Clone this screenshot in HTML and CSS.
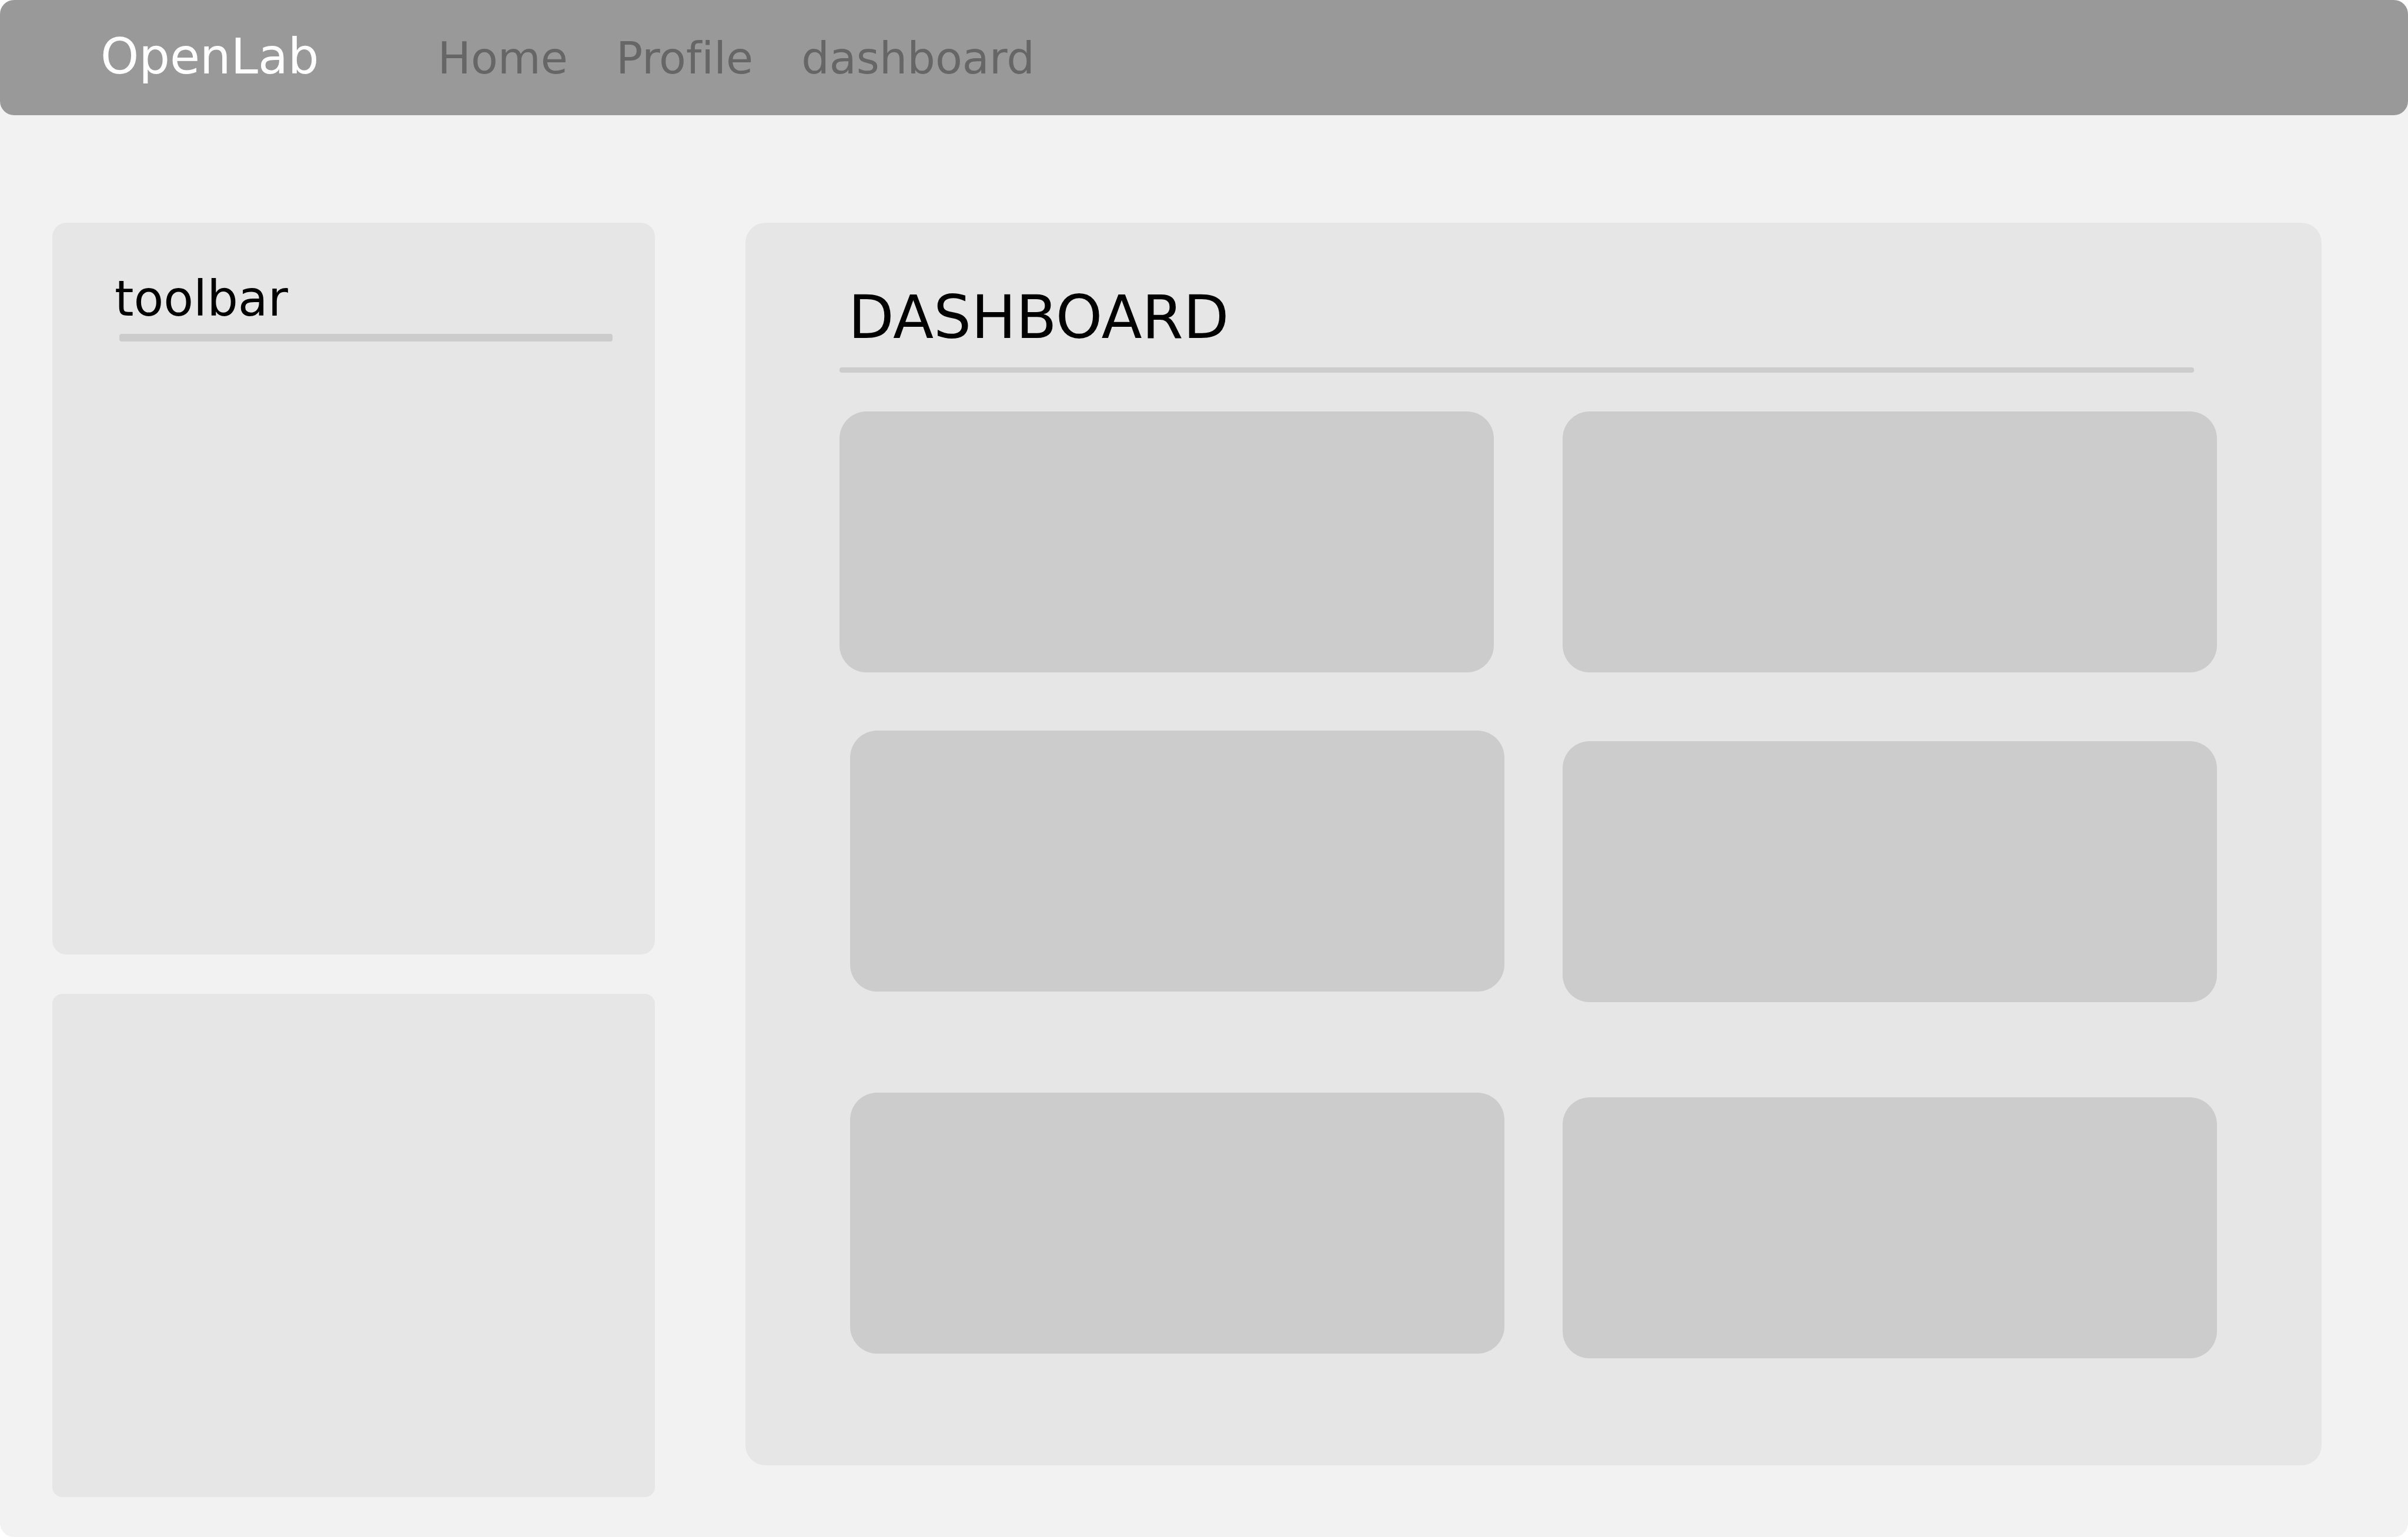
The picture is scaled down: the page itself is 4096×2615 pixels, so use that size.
FILE: index.html
```html
<!DOCTYPE html>
<html lang="en">
<head>
  <meta charset="utf-8">
  <meta name="viewport" content="width=device-width, initial-scale=1">
  <title>OpenLab</title>
  <link rel="stylesheet" href="styles.css">
</head>
<body>
  <div class="page">
    <header class="navbar">
      <a class="brand" href="#">OpenLab</a>
      <nav class="nav-links">
        <a class="nav-link" href="#">Home</a>
        <a class="nav-link" href="#">Profile</a>
        <a class="nav-link" href="#">dashboard</a>
      </nav>
    </header>
    <div class="layout">
      <aside class="sidebar">
        <section class="panel toolbar">
          <h2 class="toolbar-title">toolbar</h2>
          <hr class="rule toolbar-rule">
        </section>
        <section class="panel side-panel"></section>
      </aside>
      <main class="dashboard">
        <h1 class="dashboard-title">DASHBOARD</h1>
        <hr class="rule dashboard-rule">
        <div class="cards">
          <div class="column column-left">
            <article class="card"></article>
            <article class="card"></article>
            <article class="card"></article>
          </div>
          <div class="column column-right">
            <article class="card"></article>
            <article class="card"></article>
            <article class="card"></article>
          </div>
        </div>
      </main>
    </div>
  </div>
</body>
</html>
```

FILE: styles.css
```css
* {
  box-sizing: border-box;
}

html {
  background: #fff;
}

body {
  margin: 0;
  font-family: Verdana, "DejaVu Sans", sans-serif;
  font-variant-ligatures: none;
  color: #000;
}

.page {
  min-height: 100vh;
  background: #f2f2f2;
  border-radius: 24px;
}

/* Top bar */
.navbar {
  display: flex;
  align-items: baseline;
  gap: 202px;
  min-height: 196px;
  padding-left: 171px;
  background: #999;
  border-radius: 24px;
}

.brand {
  font-size: 83px;
  line-height: 194px;
  color: #fff;
  text-decoration: none;
}

.nav-links {
  display: flex;
  gap: 82px;
}

.nav-link {
  font-size: 75px;
  line-height: 96px;
  color: #666;
  text-decoration: none;
}

/* Sidebar and dashboard */
.layout {
  display: grid;
  grid-template-columns: 1025fr 2681fr;
  align-items: start;
  gap: 154px;
  padding: 183px 147px 68px 89px;
}

.sidebar {
  display: flex;
  flex-direction: column;
  gap: 67px;
}

.panel {
  background: #e6e6e6;
}

.toolbar {
  min-height: 1245px;
  padding: 82px 72px 80px 106px;
  border-radius: 24px;
}

.side-panel {
  min-height: 856px;
  border-radius: 17px;
}

.toolbar-title {
  margin: 0;
  font-size: 83px;
  font-weight: 400;
  line-height: 96px;
}

.rule {
  border: 0;
  background: #ccc;
  border-radius: 4px;
}

.toolbar-rule {
  height: 13px;
  margin: 11px 0 0 8px;
}

.dashboard {
  padding: 101px 178px 182px 160px;
  background: #e6e6e6;
  border-radius: 34px;
}

.dashboard-title {
  margin: 0;
  padding-left: 15px;
  font-size: 101px;
  font-weight: 400;
  line-height: 120px;
}

.dashboard-rule {
  height: 9px;
  margin: 25px 39px 66px 0;
}

/* Card columns */
.cards {
  display: grid;
  grid-template-columns: 1131fr 1113fr;
  gap: 99px;
}

.column {
  display: flex;
  flex-direction: column;
}

.card {
  min-height: 444px;
  background: #ccc;
  border-radius: 46px;
}

.column-left .card {
  margin: 0 0 0 18px;
}

.column-left .card:first-child {
  margin: 0 18px 99px 0;
}

.column-left .card:last-child {
  margin-top: 172px;
}

.column-right {
  gap: 117px;
}

.column-right .card:last-child {
  margin-top: 45px;
}
```
